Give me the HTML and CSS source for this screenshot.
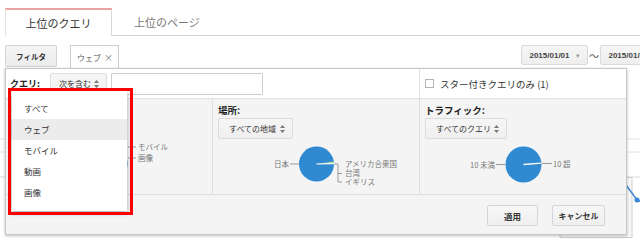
FILE: index.html
```html
<!DOCTYPE html>
<html lang="ja">
<head>
  <meta charset="utf-8" />
  <title>検索クエリ</title>
  <link rel="stylesheet" href="styles.css">
</head>
<body>
<div class="page">
  <nav class="tabs">
    <div class="tab active">上位のクエリ</div>
    <div class="tab">上位のページ</div>
  </nav>

  <div class="toolbar">
    <button class="filter-btn">フィルタ</button>
    <div class="chip">ウェブ<span class="chip-x">×</span></div>
    <div class="dates">
      <button class="date-btn">2015/01/01<span class="caret">▾</span></button>
      <span class="tilde">〜</span>
      <button class="date-btn">2015/01/31<span class="caret">▾</span></button>
    </div>
  </div>

  <!-- report behind the filter popup -->
  <div class="report">
    <svg width="640" height="166" viewBox="0 0 640 166">
      <line x1="0" y1="62" x2="640" y2="62" stroke="#e4e4e4"/>
      <line x1="0" y1="75" x2="640" y2="75" stroke="#e4e4e4"/>
      <line x1="0" y1="100" x2="640" y2="100" stroke="#d8d8d8"/>
      <rect x="560" y="100.5" width="72" height="60" fill="#f7f7f7" stroke="#cfcfcf"/>
      <polyline points="626,108 637,123 645,126" fill="none" stroke="#3a86d6" stroke-width="1.5"/>
      <circle cx="637" cy="123" r="2.5" fill="#3a86d6"/>
    </svg>
  </div>

  <div class="filter-panel">
    <div class="panel-top">
      <div class="query-row">
        <span class="query-label">クエリ:</span>
        <div class="select small">次を含む<svg class="updown" width="5" height="8" viewBox="0 0 5 8"><path d="M2.5 0 5 3H0zM2.5 8 5 5H0z" fill="#777"/></svg></div>
        <input class="query-input" type="text">
      </div>
      <label class="star-only"><span class="checkbox"></span>スター付きクエリのみ (1)</label>
    </div>

    <div class="panel-body">
      <div class="col">
        <div class="col-title">タイプ:</div>
        <div class="select type">ウェブ<svg class="updown" width="5" height="8" viewBox="0 0 5 8"><path d="M2.5 0 5 3H0zM2.5 8 5 5H0z" fill="#777"/></svg></div>
        <svg class="chart" width="206" height="50" viewBox="0 0 206 50">
          <circle cx="104" cy="24" r="17.5" fill="#2f8ad2"/>
          <line x1="122" y1="7" x2="130" y2="7" stroke="#999"/>
          <line x1="122" y1="18" x2="130" y2="18" stroke="#999"/>
          <text x="132" y="10">モバイル</text>
          <text x="132" y="21">画像</text>
        </svg>
      </div>
      <div class="col">
        <div class="col-title">場所:</div>
        <div class="select place">すべての地域<svg class="updown" width="5" height="8" viewBox="0 0 5 8"><path d="M2.5 0 5 3H0zM2.5 8 5 5H0z" fill="#777"/></svg></div>
        <svg class="chart" width="206" height="50" viewBox="0 0 206 50">
          <circle cx="103.5" cy="24" r="17.5" fill="#2f8ad2"/>
          <polygon points="103.5,24 120.8,21.6 121,23.4" fill="#b5dc8c"/>
          <line x1="103.5" y1="24" x2="121" y2="23.6" stroke="#fff" stroke-width="1.2"/>
          <line x1="77" y1="24" x2="86" y2="24" stroke="#999"/>
          <polyline points="121,24 125,24 125,42 129,42" fill="none" stroke="#999"/>
          <line x1="125" y1="33.5" x2="129" y2="33.5" stroke="#999"/>
          <text x="76" y="27" text-anchor="end">日本</text>
          <text x="132" y="26.5">アメリカ合衆国</text>
          <text x="132" y="36">台湾</text>
          <text x="132" y="45">イギリス</text>
        </svg>
      </div>
      <div class="col">
        <div class="col-title">トラフィック:</div>
        <div class="select traffic">すべてのクエリ<svg class="updown" width="5" height="8" viewBox="0 0 5 8"><path d="M2.5 0 5 3H0zM2.5 8 5 5H0z" fill="#777"/></svg></div>
        <svg class="chart" width="206" height="50" viewBox="0 0 206 50">
          <circle cx="103.5" cy="24.5" r="18" fill="#2f8ad2"/>
          <line x1="103.5" y1="24.5" x2="121.3" y2="23.2" stroke="#fff" stroke-width="1.3"/>
          <line x1="76" y1="24.5" x2="85" y2="24.5" stroke="#999"/>
          <line x1="122" y1="23.5" x2="132" y2="23.5" stroke="#999"/>
          <text x="75" y="27.5" text-anchor="end">10 未満</text>
          <text x="133" y="26.5">10 超</text>
        </svg>
      </div>
    </div>

    <div class="panel-foot">
      <button class="btn apply">適用</button>
      <button class="btn cancel">キャンセル</button>
    </div>
  </div>

  <ul class="type-menu">
    <li>すべて</li>
    <li class="selected">ウェブ</li>
    <li>モバイル</li>
    <li>動画</li>
    <li>画像</li>
  </ul>
  <div class="highlight-box"></div>
</div>
</body>
</html>
```

FILE: styles.css
```css
*{box-sizing:border-box}
html,body{margin:0;height:100%}
body{
  background:#fff;color:#333;
  font-family:"Noto Sans CJK JP","Liberation Sans",sans-serif;
}
button{font-family:inherit;margin:0;padding:0;cursor:pointer}

.page{position:relative;width:640px;height:243px;overflow:hidden}

/* tabs */
.tabs{display:flex;margin:8px 0 0 5px;height:28px;border-bottom:1px solid #d4d4d4}
.tab{
  display:flex;align-items:center;justify-content:center;
  padding:0 22px;font-size:11px;color:#777;
}
.tab.active{
  width:107px;padding:0;height:28px;margin-bottom:-1px;
  background:#fff;color:#333;
  border-top:2px solid #eba2a2;border-left:1px solid #e2e2e2;border-right:1px solid #d8d8d8;
}

/* toolbar */
.toolbar{display:flex;align-items:flex-start;margin:9px -27px 0 0;padding-left:5px}
.filter-btn{
  width:52px;height:22px;font-size:7.5px;font-weight:700;color:#333;
  background:linear-gradient(#f5f5f5,#ececec);border:1px solid #d3d3d3;border-radius:2px;
}
.chip{
  width:49px;height:26px;margin-left:13px;padding:6px 0 0 6px;
  background:#fff;border:1px solid #cfcfcf;border-bottom:0;
  font-size:8px;line-height:12px;color:#555;
}
.chip-x{margin-left:3px;font-size:9px;color:#777}
.dates{display:flex;align-items:center;margin-left:auto}
.date-btn{
  width:67px;height:20px;flex-shrink:0;
  font-family:"Liberation Sans",Arial,sans-serif;font-size:8px;font-weight:700;color:#444;
  background:linear-gradient(#f6f6f6,#eeeeee);border:1px solid #dadada;border-radius:2px;
}
.caret{margin-left:6px;font-size:7px;color:#999;font-weight:400}
.tilde{width:12px;text-align:center;font-size:10px;color:#555}

.report{margin-top:6px}
.report svg{display:block}

/* filter popup */
.filter-panel{
  position:absolute;left:5px;top:68px;width:622px;height:167px;
  display:flex;flex-direction:column;
  background:#f4f4f4;border:1px solid #c6c6c6;
  box-shadow:0 1px 3px rgba(0,0,0,.25);
}
.panel-top{display:flex;height:30px;background:#fff;border-bottom:1px solid #e0e0e0}
.query-row{display:flex;align-items:center;width:413px;padding-left:4px}
.query-label{width:40px;font-size:9px;font-weight:700;color:#222}
.select{
  display:flex;align-items:center;justify-content:space-between;
  height:21px;padding:0 7px 0 10px;
  font-size:8px;color:#333;
  background:linear-gradient(#f6f6f6,#efefef);border:1px solid #dcdcdc;border-radius:2px;
}
.select.small{width:57px;height:22px;padding-left:8px;margin-right:4px}
.query-input{width:152px;height:22px;border:1px solid #cfcfcf;border-radius:1px;padding:0 4px}
.star-only{
  flex:1;display:flex;align-items:center;padding-left:5px;
  border-left:1px solid #e0e0e0;font-size:9.5px;color:#333;
}
.checkbox{width:9px;height:9px;margin-right:6px;border:1px solid #b5b5b5;background:#fff}

.panel-body{display:flex;height:96px;border-bottom:1px solid #dedede}
.col{width:207px;padding:5px 0 0 5px;border-left:1px solid #dedede}
.col:first-child{width:206px;border-left:0}
.col-title{font-size:9.5px;font-weight:700;line-height:12px;color:#222}
.col .select{margin-top:2px}
.select.type{width:56px}
.select.place{width:75px}
.select.traffic{width:82px}
.chart{display:block;margin:1px 0 0 -5px;overflow:visible}
.chart text{font-size:7.5px;fill:#777}

.panel-foot{display:flex;justify-content:flex-end;gap:14px;padding:10px 21px 0 0}
.btn{
  height:21px;font-size:8.5px;font-weight:700;color:#333;
  background:linear-gradient(#f7f7f7,#efefef);border:1px solid #d6d6d6;border-radius:2px;
}
.btn.apply{width:51px}
.btn.cancel{width:53px;font-size:8px}

/* open type dropdown */
.type-menu{
  position:absolute;left:12px;top:91px;width:115px;height:120px;
  margin:0;padding:6.5px 0 0;list-style:none;
  background:#fff;box-shadow:0 2px 5px rgba(0,0,0,.3);
}
.type-menu li{height:21px;line-height:21px;padding-left:12px;font-size:8.5px;color:#333}
.type-menu li.selected{background:#ececec}

.highlight-box{
  position:absolute;left:8px;top:88px;width:125px;height:127px;
  border:3px solid #f00;
}
```
